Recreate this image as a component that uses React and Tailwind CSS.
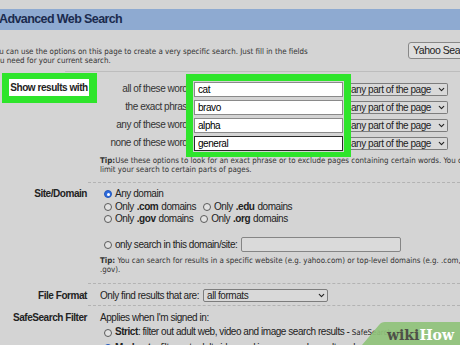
import { ChevronDown } from 'lucide-react'

function Radio({ on }) {
  if (on) {
    return (
      <span className="w-[8px] h-[8px] shrink-0 rounded-full bg-[#2c6be0] border border-[#2558b8] flex items-center justify-center">
        <span className="w-[3px] h-[3px] rounded-full bg-white" />
      </span>
    )
  }
  return <span className="w-[8px] h-[8px] shrink-0 rounded-full border border-[#5a5a5a] bg-[#e2e2e2]" />
}

function Select({ label, className }) {
  return (
    <div className={`flex items-center justify-between border-[#7d7d7d] bg-[#d9d9d9] ${className}`}>
      <span className="whitespace-nowrap">{label}</span>
      <ChevronDown className="w-[9px] h-[9px] mr-[1px] shrink-0" strokeWidth={3} />
    </div>
  )
}

function Row({ label, className, children }) {
  return (
    <div className={`flex ${className}`}>
      <div className="w-[87px] shrink-0 text-right font-bold whitespace-nowrap">{label}</div>
      <div className="pl-[13px] flex-1 min-w-0">{children}</div>
    </div>
  )
}

const words = [
  { label: 'all of these words', value: 'cat' },
  { label: 'the exact phrase', value: 'bravo' },
  { label: 'any of these words', value: 'alpha' },
  { label: 'none of these words', value: 'general', focus: true },
]

export default function App() {
  return (
    <div className="relative w-[460px] h-[345px] overflow-hidden bg-[#d4d4d4] text-[#222] text-[10px] tracking-[-0.45px] font-['Liberation_Sans',Arial,sans-serif]">
      <div className="h-[9px]" />
      <div className="h-[21px] bg-[#8eaad1] flex items-center">
        <h1 className="-ml-[1px] text-[12.5px] tracking-[-0.6px] font-bold leading-none text-[#1b2b4e] whitespace-nowrap">Advanced Web Search</h1>
      </div>

      <div className="h-[41px] flex items-start justify-between">
        <p className="-ml-[8.5px] pt-[17px] whitespace-nowrap text-[7.9px] tracking-normal leading-[9px] text-[#333] font-['DejaVu_Sans_Condensed','DejaVu_Sans',sans-serif] [font-stretch:condensed]">
          You can use the options on this page to create a very specific search. Just fill in the fields
          <br />
          you need for your current search.
        </p>
        <button className="mt-[12px] -mr-[14px] w-[66px] h-[17px] shrink-0 border border-[#888] rounded-[3px] bg-[#dedede] text-left pl-[4px] text-[10.5px] whitespace-nowrap">
          Yahoo Search
        </button>
      </div>
      <div className="ml-[65px] h-px bg-[#bdbdbd]" />

      <div className="h-[85px] flex items-start">
        <div className="mt-[1px] ml-[2px] w-[95px] h-[30px] bg-[#2ee52b] pt-[6px] pl-[7px] shrink-0">
          <div className="w-[80px] h-[17px] bg-white flex items-center justify-center font-bold whitespace-nowrap">Show results with</div>
        </div>
        <div className="w-[95px] shrink-0 pt-[9px] text-right text-[#333]">
          {words.map(w => (
            <div key={w.label} className="h-[18px] leading-[16px] whitespace-nowrap">{w.label}</div>
          ))}
        </div>
        <div className="relative z-10 -ml-[6px] mt-[2px] shrink-0 border-t-[7px] border-b-[5px] border-x-[7px] border-[#2ee52b] p-[1px] flex flex-col gap-[3px]">
          {words.map(w => (
            <div
              key={w.value}
              className={`w-[149px] h-[15px] bg-white flex items-center pl-[3px] text-black ${w.focus ? 'border border-[#2a2a2a]' : 'border border-[#8a8a8a]'}`}
            >
              {w.value}
            </div>
          ))}
        </div>
        <div className="mt-[11px] flex flex-col gap-[5px] shrink-0">
          {words.map(w => (
            <Select key={w.value} label="any part of the page" className="w-[97px] h-[13px] border-y border-r rounded-r-[2px]" />
          ))}
        </div>
      </div>

      <p className="-mt-[1.5px] pl-[100px] whitespace-nowrap text-[7.9px] tracking-normal leading-[9px] text-[#333] font-['DejaVu_Sans_Condensed','DejaVu_Sans',sans-serif] [font-stretch:condensed]">
        <b>Tip:</b>Use these options to look for an exact phrase or to exclude pages containing certain words. You can also
        <br />
        limit your search to certain parts of pages.
      </p>

      <div className="mt-[8.5px] ml-[88px] border-t border-dashed border-[#b3b3b3]" />

      <Row label="Site/Domain" className="mt-[5px] leading-[12.5px]">
        <div className="flex items-center gap-[3px] pl-[4px]"><Radio on />Any domain</div>
        <div className="flex items-center gap-[3px] pl-[4px] whitespace-nowrap">
          <Radio />Only <b>.com</b> domains
          <span className="ml-[1px]" /><Radio />Only <b>.edu</b> domains
        </div>
        <div className="flex items-center gap-[3px] pl-[4px] whitespace-nowrap">
          <Radio />Only <b>.gov</b> domains
          <span className="ml-[1px]" /><Radio />Only <b>.org</b> domains
        </div>
        <div className="mt-[11.75px] h-[15px] flex items-center gap-[3px] pl-[4px] whitespace-nowrap">
          <Radio />only search in this domain/site:
          <div className="ml-[1px] w-[160px] h-[15px] border border-[#858585] rounded-[2px] bg-[#dadada] shrink-0" />
        </div>
        <p className="mt-[3.5px] whitespace-nowrap text-[7.9px] tracking-normal leading-[9px] text-[#333] font-['DejaVu_Sans_Condensed','DejaVu_Sans',sans-serif] [font-stretch:condensed]">
          <b>Tip:</b> You can search for results in a specific website (e.g. yahoo.com) or top-level domains (e.g. .com, .org,
          <br />
          .gov).
        </p>
      </Row>

      <div className="mt-[9.5px] ml-[88px] border-t border-dashed border-[#b3b3b3]" />

      <Row label="File Format" className="mt-[5px] leading-[13px]">
        <div className="flex items-center h-[13px] whitespace-nowrap">
          Only find results that are:
          <Select label="all formats" className="ml-[4px] w-[125px] h-[13px] border rounded-[2px] pl-[3px]" />
        </div>
      </Row>

      <div className="mt-[3px] ml-[88px] border-t border-dashed border-[#b3b3b3]" />

      <Row label="SafeSearch Filter" className="mt-[4.5px] leading-[14.5px]">
        <div className="whitespace-nowrap">Applies when I'm signed in:</div>
        <div className="flex items-center gap-[3px] pl-[4px] whitespace-nowrap">
          <Radio />
          <span><b>Strict</b>: filter out adult web, video and image search results - <span className="text-[7.9px] tracking-normal font-['DejaVu_Sans_Condensed','DejaVu_Sans',sans-serif] [font-stretch:condensed]">SafeSearch on</span></span>
        </div>
        <div className="flex items-center gap-[3px] pl-[4px] whitespace-nowrap">
          <Radio on />
          <span><b>Moderate</b>: filter out adult video and image search results only</span>
        </div>
      </Row>

      <div className="absolute right-0 bottom-0 w-[100px] h-[24px]">
        <svg className="absolute inset-0" width="100" height="24" viewBox="0 0 100 24">
          <path d="M2 24 L19 4 Q21 1 25 1 L100 1 L100 24 Z" fill="#8fc27a" fillOpacity="0.92" />
        </svg>
        <div className="absolute left-[27px] bottom-[1px] text-[14px] tracking-normal leading-[18px] font-bold font-['DejaVu_Serif',serif] whitespace-nowrap">
          <span className="text-[#4e5048]">wiki</span><span className="text-white">How</span>
        </div>
      </div>
    </div>
  )
}
